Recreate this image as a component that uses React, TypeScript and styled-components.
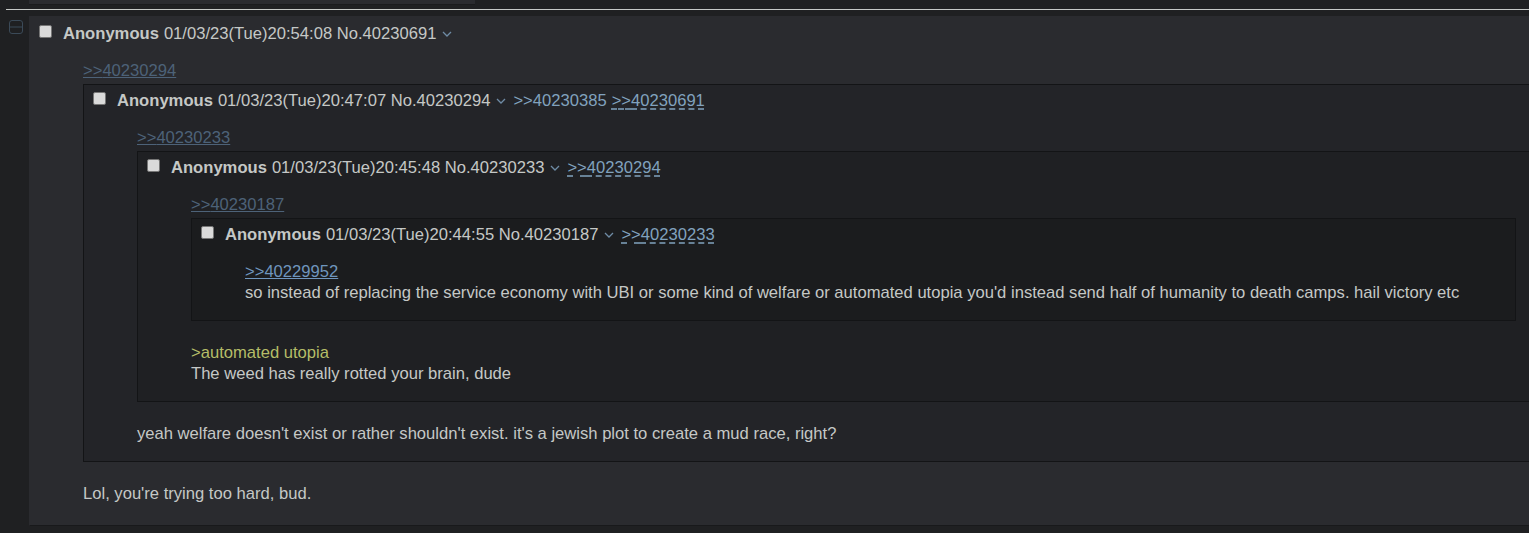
import React from "react";
import styled, { createGlobalStyle } from "styled-components";

type Line = { kind: "text" | "green" | "quote"; text: string };

interface PostData {
  time: string;
  no: string;
  backlinks: { no: string; current?: boolean }[];
  quote?: { no: string; post: PostData };
  lines: Line[];
}

const level3: PostData = {
  time: "01/03/23(Tue)20:44:55",
  no: "40230187",
  backlinks: [{ no: "40230233", current: true }],
  lines: [
    { kind: "quote", text: ">>40229952" },
    {
      kind: "text",
      text: "so instead of replacing the service economy with UBI or some kind of welfare or automated utopia you'd instead send half of humanity to death camps. hail victory etc",
    },
  ],
};

const level2: PostData = {
  time: "01/03/23(Tue)20:45:48",
  no: "40230233",
  backlinks: [{ no: "40230294", current: true }],
  quote: { no: "40230187", post: level3 },
  lines: [
    { kind: "green", text: ">automated utopia" },
    { kind: "text", text: "The weed has really rotted your brain, dude" },
  ],
};

const level1: PostData = {
  time: "01/03/23(Tue)20:47:07",
  no: "40230294",
  backlinks: [{ no: "40230385" }, { no: "40230691", current: true }],
  quote: { no: "40230233", post: level2 },
  lines: [
    {
      kind: "text",
      text: "yeah welfare doesn't exist or rather shouldn't exist. it's a jewish plot to create a mud race, right?",
    },
  ],
};

const rootPost: PostData = {
  time: "01/03/23(Tue)20:54:08",
  no: "40230691",
  backlinks: [],
  quote: { no: "40230294", post: level1 },
  lines: [{ kind: "text", text: "Lol, you're trying too hard, bud." }],
};

// background per nesting depth, outer post first
const LEVEL_BG = ["#2a2b2f", "#232428", "#1f2023", "#1b1c1e"];

const GlobalStyle = createGlobalStyle`
  html, body {
    margin: 0;
    padding: 0;
    overflow: hidden;
    background: #1f2022;
  }
  body {
    font-family: "Liberation Sans", Arial, sans-serif;
    font-size: 16.6px;
    color: #c5c8c6;
  }
`;

const Page = styled.div`
  width: max-content;
  min-width: 1529px;
  height: 533px;
  background: #1f2022;
`;

const PrevPostStub = styled.div`
  margin-left: 29px;
  width: 446px;
  height: 4px;
  background: #2a2b2f;
  border-bottom: 1px solid #1a1b1d;
`;

const Divider = styled.div`
  margin: 4px 0 0 6px;
  height: 1px;
  background: #c5c8c6;
`;

const Thread = styled.div`
  display: flex;
  align-items: flex-start;
  margin-top: 6px;
`;

const SideArrows = styled.div`
  width: 29px;
  display: flex;
  justify-content: flex-start;
  padding: 4px 0 0 9px;
  box-sizing: border-box;
`;

const Post = styled.div<{ $level: number }>`
  width: max-content;
  background: ${({ $level }) => LEVEL_BG[$level] ?? LEVEL_BG[3]};
  border: 1px solid ${({ $level }) => ($level === 0 ? "#2a2b2f" : "#131416")};
  border-bottom-color: ${({ $level }) => ($level === 0 ? "#18191b" : "#131416")};
  padding: ${({ $level }) => ($level === 0 ? "6px 14px 5px 0" : "5px 16px 1px 0")};
  margin: ${({ $level }) => ($level === 0 ? "0" : "3px 0 21px")};
`;

const PostInfo = styled.div`
  display: flex;
  align-items: flex-start;
  height: 21px;
  line-height: 21px;
  padding-left: 9px;
  white-space: nowrap;
`;

const Checkbox = styled.span`
  width: 13px;
  height: 13px;
  margin-top: 2px;
  margin-right: 11px;
  box-sizing: border-box;
  border: 1px solid #767676;
  border-radius: 2px;
  background: #dadada;
  flex-shrink: 0;
`;

const Name = styled.span`
  font-weight: bold;
  color: #c5c8c6;
  margin-right: 5px;
`;

const Meta = styled.span`
  color: #c5c8c6;
`;

const Caret = styled.span`
  display: inline-flex;
  align-items: center;
  height: 21px;
  margin: 0 7px 0 6px;
`;

const Backlink = styled.a<{ $current?: boolean }>`
  color: #81a2be;
  text-decoration: ${({ $current }) => ($current ? "underline dashed" : "none")};
  text-underline-offset: 3px;
  margin-right: 5px;
  cursor: pointer;
`;

const Message = styled.div`
  margin: 16px 40px 16px 53px;
  line-height: 21px;
  white-space: nowrap;
`;

const InlinedQuote = styled.a`
  display: block;
  width: max-content;
  color: #4d6278;
  text-decoration: underline;
  cursor: pointer;
`;

const QuoteLink = styled.a`
  display: block;
  width: max-content;
  color: #6f95bd;
  text-decoration: underline;
  cursor: pointer;
`;

const TextLine = styled.div<{ $green?: boolean }>`
  color: ${({ $green }) => ($green ? "#b5bd68" : "#c5c8c6")};
`;

const MinusIcon = () => (
  <svg width="14" height="14" viewBox="0 0 14 14" fill="none">
    <rect x="0.5" y="0.5" width="13" height="13" rx="2.5" stroke="#3b4a58" />
    <line x1="1" y1="7" x2="13" y2="7" stroke="#3b4a58" />
  </svg>
);

const ChevronIcon = () => (
  <svg width="10" height="6" viewBox="0 0 10 6" fill="none">
    <polyline points="1,1 5,5 9,1" stroke="#6f8ba5" strokeWidth="1.3" />
  </svg>
);

const PostView = ({ post, level }: { post: PostData; level: number }) => (
  <Post $level={level}>
    <PostInfo>
      <Checkbox />
      <Name>Anonymous</Name>
      <Meta>
        {post.time} No.{post.no}
      </Meta>
      <Caret>
        <ChevronIcon />
      </Caret>
      {post.backlinks.map((b) => (
        <Backlink key={b.no} $current={b.current}>
          &gt;&gt;{b.no}
        </Backlink>
      ))}
    </PostInfo>
    <Message>
      {post.quote && (
        <>
          <InlinedQuote>&gt;&gt;{post.quote.no}</InlinedQuote>
          <PostView post={post.quote.post} level={level + 1} />
        </>
      )}
      {post.lines.map((line, i) =>
        line.kind === "quote" ? (
          <QuoteLink key={i}>{line.text}</QuoteLink>
        ) : (
          <TextLine key={i} $green={line.kind === "green"}>
            {line.text}
          </TextLine>
        )
      )}
    </Message>
  </Post>
);

export default function App() {
  return (
    <>
      <GlobalStyle />
      <Page>
        <PrevPostStub />
        <Divider />
        <Thread>
          <SideArrows>
            <MinusIcon />
          </SideArrows>
          <PostView post={rootPost} level={0} />
        </Thread>
      </Page>
    </>
  );
}
